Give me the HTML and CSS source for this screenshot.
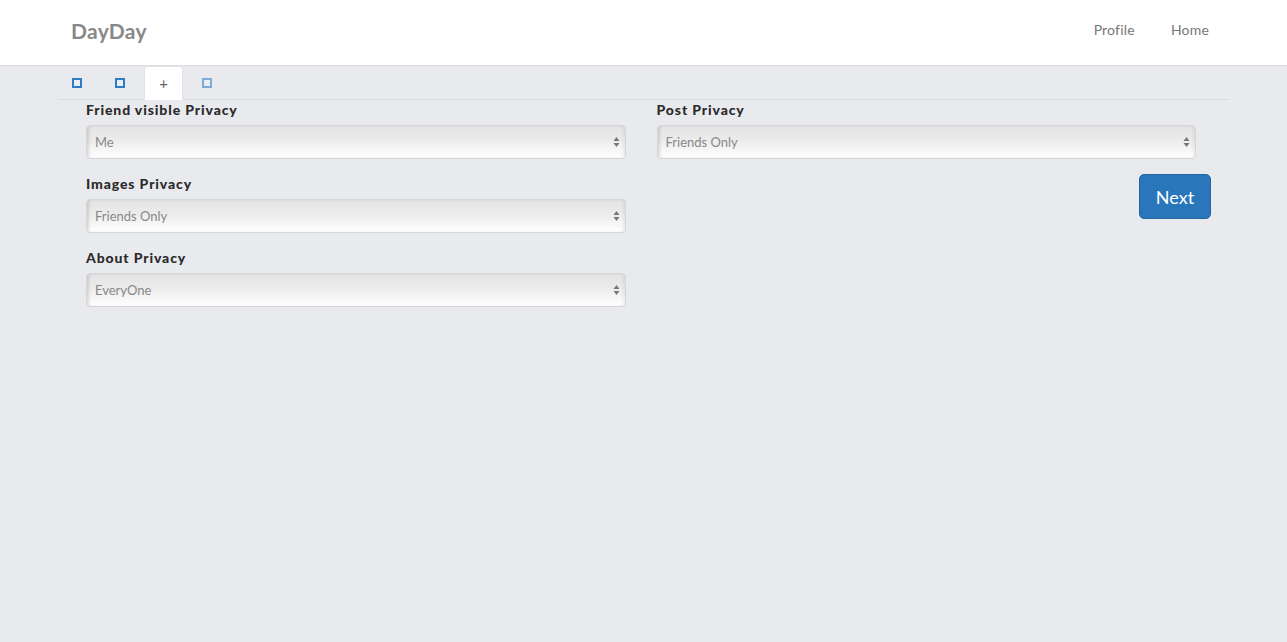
FILE: index.html
```html
<!DOCTYPE html>
<html>
<head>
<meta charset="utf-8">
<title>DayDay</title>
<link rel="stylesheet" href="styles.css">
</head>
<body>
<header class="navbar">
  <div class="container nav-inner">
    <a class="brand" href="#">DayDay</a>
    <nav class="nav-links">
      <a href="#">Profile</a>
      <a href="#">Home</a>
    </nav>
  </div>
</header>
<main class="container">
  <ul class="tabs">
    <li class="tab"><span class="sq"></span></li>
    <li class="tab"><span class="sq"></span></li>
    <li class="tab active"><span class="plus">+</span></li>
    <li class="tab"><span class="sq light"></span></li>
  </ul>
  <form class="form">
    <div class="col">
      <div class="field">
        <label>Friend visible Privacy</label>
        <div class="select-wrap">
          <select><option>Me</option></select>
          <svg class="arrows" width="7" height="12" viewBox="0 0 7 12"><path d="M3.5 1 L6.5 5 L0.5 5 Z M3.5 11 L6.5 7 L0.5 7 Z" fill="#777"/></svg>
        </div>
      </div>
      <div class="field">
        <label>Images Privacy</label>
        <div class="select-wrap">
          <select><option>Friends Only</option></select>
          <svg class="arrows" width="7" height="12" viewBox="0 0 7 12"><path d="M3.5 1 L6.5 5 L0.5 5 Z M3.5 11 L6.5 7 L0.5 7 Z" fill="#777"/></svg>
        </div>
      </div>
      <div class="field">
        <label>About Privacy</label>
        <div class="select-wrap">
          <select><option>EveryOne</option></select>
          <svg class="arrows" width="7" height="12" viewBox="0 0 7 12"><path d="M3.5 1 L6.5 5 L0.5 5 Z M3.5 11 L6.5 7 L0.5 7 Z" fill="#777"/></svg>
        </div>
      </div>
    </div>
    <div class="col">
      <div class="field">
        <label>Post Privacy</label>
        <div class="select-wrap">
          <select><option>Friends Only</option></select>
          <svg class="arrows" width="7" height="12" viewBox="0 0 7 12"><path d="M3.5 1 L6.5 5 L0.5 5 Z M3.5 11 L6.5 7 L0.5 7 Z" fill="#777"/></svg>
        </div>
      </div>
      <div class="actions">
        <button type="button" class="btn">Next</button>
      </div>
    </div>
  </form>
</main>
</body>
</html>
```

FILE: styles.css
```css
* { box-sizing: border-box; }
html, body {
  margin: 0;
  padding: 0;
  background: #e9eaee;
  font-family: Lato, "Open Sans", sans-serif;
  color: #333;
  font-size: 14px;
}
.container {
  width: 1171px;
  margin: 0 auto;
}
.navbar {
  background: #fff;
  height: 66px;
  border-bottom: 1px solid #dcdcdc;
}
.nav-inner {
  display: flex;
  align-items: center;
  justify-content: space-between;
  height: 65px;
}
.brand {
  margin-left: 13px;
  font-size: 21px;
  font-weight: 700;
  color: #888;
  text-decoration: none;
  margin-top: -5px;
  letter-spacing: 0.3px;
}
.nav-links {
  display: flex;
  margin-top: -6px;
  margin-right: 2px;
}
.nav-links a {
  color: #777;
  text-decoration: none;
  font-size: 14px;
  letter-spacing: 0.2px;
  padding: 0 18px;
}
.tabs {
  list-style: none;
  margin: 0;
  padding: 0;
  display: flex;
  gap: 5px;
  border-bottom: 1px solid #dcdde1;
  height: 34px;
}
.tab {
  width: 38px;
  height: 34px;
  display: flex;
  align-items: center;
  justify-content: center;
  border-radius: 4px 4px 0 0;
  margin-bottom: -1px;
}
.tab.active {
  width: 39px;
  background: #fff;
  border: 1px solid #e2e3e7;
  border-bottom-color: #fff;
}
.sq {
  width: 10px;
  height: 10px;
  border: 2px solid #2f7cc4;
  background: #e8eef6;
  margin-top: -1px;
}
.sq.light {
  border-color: #7fa9d6;
}
.plus {
  color: #666;
  font-size: 15px;
  line-height: 1;
  margin-top: 1px;
}
.form {
  display: flex;
  gap: 31px;
  padding: 0 33px 0 28px;
}
.col {
  flex: 1;
}
.field {
  margin-bottom: 15px;
}
.field label {
  display: block;
  font-weight: 900;
  font-size: 14px;
  line-height: 20px;
  margin-bottom: 5px;
  color: #2b2b2b;
  letter-spacing: 0.88px;
}
.select-wrap {
  position: relative;
}
.select-wrap select {
  -webkit-appearance: none;
  appearance: none;
  display: block;
  width: 100%;
  height: 34px;
  border: 1px solid #d6d6d6;
  border-radius: 4px;
  background: linear-gradient(to bottom, #e3e3e3 0%, #ececec 45%, #ffffff 100%);
  box-shadow: inset 3px 0 3px -1px rgba(0,0,0,0.12), inset -3px 0 3px -1px rgba(0,0,0,0.06);
  font-family: Lato, "Open Sans", sans-serif;
  font-size: 13px;
  color: #888;
  padding: 0 8px;
  outline: none;
}
.arrows {
  position: absolute;
  right: 6px;
  top: 11px;
  pointer-events: none;
}
.actions {
  display: flex;
  justify-content: flex-end;
  margin-right: -15px;
}
.btn {
  font-family: Lato, "Open Sans", sans-serif;
  font-size: 18px;
  color: #fff;
  background: #2a76bb;
  border: 1px solid #2567a5;
  border-radius: 5px;
  width: 72px;
  height: 45px;
  padding: 0;
  cursor: pointer;
}
```
